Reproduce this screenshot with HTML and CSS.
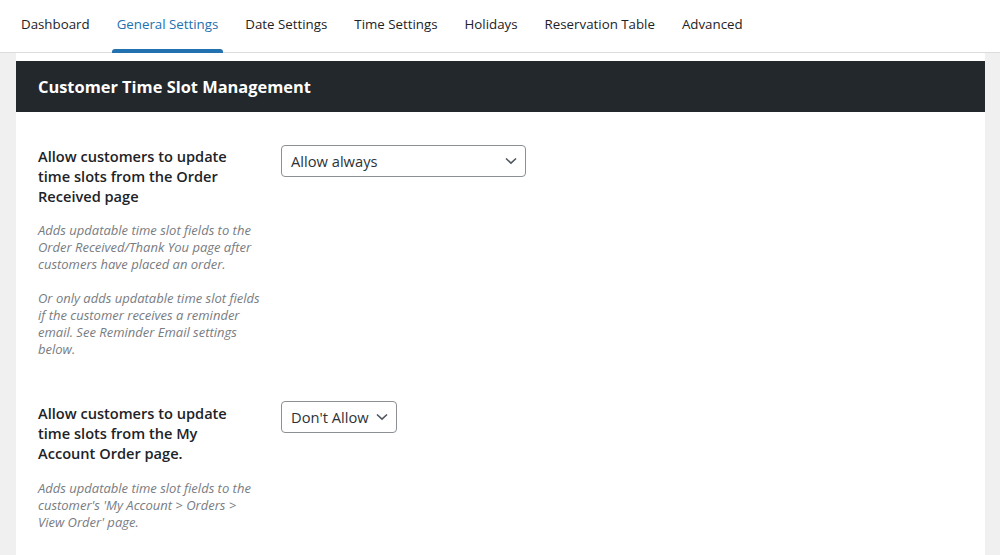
FILE: index.html
```html
<!DOCTYPE html>
<html lang="en">
<head>
<meta charset="utf-8">
<title>Customer Time Slot Management</title>
<link rel="stylesheet" href="styles.css">
</head>
<body>
<nav class="tabs">
  <a class="tab">Dashboard</a>
  <a class="tab active">General Settings</a>
  <a class="tab">Date Settings</a>
  <a class="tab">Time Settings</a>
  <a class="tab">Holidays</a>
  <a class="tab">Reservation Table</a>
  <a class="tab">Advanced</a>
</nav>
<main class="main">
  <section class="panel">
    <h2 class="panel-title">Customer Time Slot Management</h2>
    <div class="row row-first">
      <div class="label-col">
        <div class="label">Allow customers to update time slots from the Order Received page</div>
        <p class="desc">Adds updatable time slot fields to the Order Received/Thank You page after customers have placed an order.<br><br>Or only adds updatable time slot fields if the customer receives a reminder email. See Reminder Email settings below.</p>
      </div>
      <div class="field">
        <div class="select select-wide">
          <span class="select-text">Allow always</span>
          <svg class="chev" width="12" height="8" viewBox="0 0 12 8"><path d="M1 1.5 L6 6.2 L11 1.5" fill="none" stroke="#50575e" stroke-width="1.6"/></svg>
        </div>
      </div>
    </div>
    <div class="row row-second">
      <div class="label-col label-col-second">
        <div class="label">Allow customers to update time slots from the My Account Order page.</div>
        <p class="desc desc-second">Adds updatable time slot fields to the customer's 'My Account &gt; Orders &gt; View Order' page.</p>
      </div>
      <div class="field">
        <div class="select">
          <span class="select-text">Don't Allow</span>
          <svg class="chev" width="12" height="8" viewBox="0 0 12 8"><path d="M1 1.5 L6 6.2 L11 1.5" fill="none" stroke="#50575e" stroke-width="1.6"/></svg>
        </div>
      </div>
    </div>
  </section>
</main>
</body>
</html>
```
FILE: styles.css
```css
* { box-sizing: border-box; }
html, body { margin: 0; padding: 0; }
body {
  background: #f0f0f1;
  font-family: "Open Sans", "Noto Sans", sans-serif;
  color: #1d2327;
  height: 555px;
  overflow: hidden;
}
.tabs {
  display: flex;
  height: 53px;
  background: #fff;
  border-bottom: 1px solid #dcdcde;
  padding-left: 16px;
  gap: 17px;
}
.tab {
  position: relative;
  display: flex;
  align-items: center;
  padding: 0 5px 4px;
  font-size: 13.3px;
  color: #1d2327;
  white-space: nowrap;
}
.tab.active { color: #2271b1; }
.tab.active::after {
  content: "";
  position: absolute;
  left: 0;
  right: 0;
  bottom: -1px;
  height: 4px;
  background: #2271b1;
  border-radius: 3px 3px 0 0;
}
.main {
  padding: 0 15px 0 16px;
}
.panel {
  background: #fff;
  padding-top: 8px;
  height: 502px;
}
.panel-title {
  margin: 0;
  height: 51px;
  background: #23282d;
  color: #fff;
  font-size: 16.4px;
  font-weight: 700;
  display: flex;
  align-items: center;
  padding-left: 22px;
}
.row {
  display: grid;
  grid-template-columns: 222px auto;
  column-gap: 21px;
  padding: 0 0 0 22px;
}
.row-first { padding-top: 33px; }
.row-second { padding-top: 43px; }
.label-col { padding-top: 1px; }
.label-col-second { padding-top: 2px; }
.label {
  font-size: 14.6px;
  font-weight: 600;
  line-height: 20px;
  color: #1d2327;
  padding-right: 4px;
}
.desc {
  margin: 15.5px 0 0;
  font-size: 13px;
  font-style: italic;
  line-height: 17.1px;
  color: #787c82;
}
.desc-second { margin-top: 17px; }
.field { display: flex; align-items: flex-start; }
.select {
  display: flex;
  align-items: center;
  height: 32px;
  border: 1px solid #8c8f94;
  border-radius: 4px;
  padding: 0 8px 0 9px;
  gap: 7px;
  font-size: 14.7px;
  color: #2c3338;
  background: #fff;
}
.select-wide { width: 245px; justify-content: space-between; }
.chev { display: block; }
```
